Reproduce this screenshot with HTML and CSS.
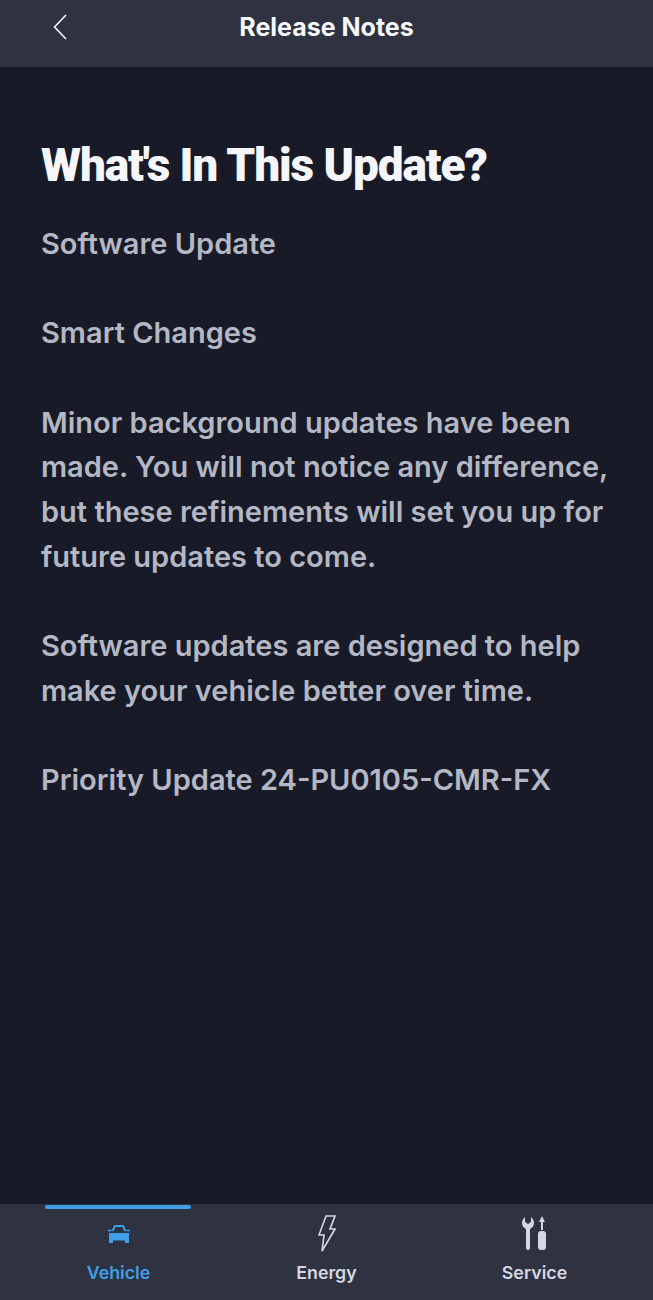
FILE: index.html
```html
<!DOCTYPE html>
<html lang="en">
<head>
<meta charset="utf-8">
<title>Release Notes</title>
<link rel="stylesheet" href="styles.css">
</head>
<body>
<div class="screen">
  <header class="topbar">
    <svg class="back" width="14" height="26" viewBox="0 0 14 26"><path d="M13 1 1.500 13 13 25" fill="none" stroke="#f4f6fb" stroke-width="1.600"/></svg>
    <h1 class="title">Release Notes</h1>
  </header>
  <main class="content">
    <h2 class="heading">What's In This Update?</h2>
    <p>Software Update</p>
    <p>Smart Changes</p>
    <p>Minor background updates have been made. You will not notice any difference, but these refinements will set you up for future updates to come.</p>
    <p>Software updates are designed to help make your vehicle better over time.</p>
    <p>Priority Update 24-PU0105-CMR-FX</p>
  </main>
  <nav class="tabs">
    <div class="tab active">
      <div class="tab-icon">
        <svg width="24" height="20" viewBox="0 0 24 20"><path d="M5.500 7 8 2h8l2.500 5" fill="none" stroke="#3f9fe6" stroke-width="2"/><path d="M1 6.500h3.500M19.500 6.500H23" stroke="#3f9fe6" stroke-width="1.600"/><path d="M2 9h20v10h-4v-2.500H6V19H2z" fill="#3f9fe6"/></svg>
      </div>
      <span>Vehicle</span>
    </div>
    <div class="tab">
      <div class="tab-icon">
        <svg width="18" height="38" viewBox="0 0 18 38"><path d="M8 1h9l-5 13h5L4 36l2-16H1z" fill="none" stroke="#d5d7e2" stroke-width="1.600"/></svg>
      </div>
      <span>Energy</span>
    </div>
    <div class="tab">
      <div class="tab-icon">
        <svg width="26" height="36" viewBox="0 0 26 36"><path d="M3 1C1 3 0 5 0 7c0 3 2 5 4 6v19a2 2 0 0 0 4 0V13c2-1 4-3 4-6 0-2-1-4-3-6v5L6 8 3 6z" fill="#d5d7e2"/><path d="m20 0 3 6h-2v8h-2V6h-2z" fill="#d5d7e2"/><rect x="16" y="15" width="8" height="19" rx="3" fill="#d5d7e2"/></svg>
      </div>
      <span>Service</span>
    </div>
  </nav>
</div>
</body>
</html>
```
FILE: styles.css
```css
* { box-sizing: border-box; }
html, body { margin: 0; padding: 0; }
body { font-family: Inter, "Liberation Sans", sans-serif; background: #181b27; }
.screen { width: 653px; height: 1300px; display: flex; flex-direction: column; background: #181b27; }
.topbar { height: 67px; background: #2f3240; display: grid; grid-template-columns: 1fr auto 1fr; align-items: start; padding: 0 0 0 53px; flex: none; }
.back { margin-top: 14px; }
.title { grid-column: 2; margin: 11px 53px 0 0; font-size: 25px; line-height: 32px; font-weight: 700; color: #f6f8fd; white-space: nowrap; }
.content { flex: 1; padding: 68px 41px 0; }
.heading { margin: 0 0 27px; font-family: Roboto, sans-serif; font-size: 46px; line-height: 60px; font-weight: 900; color: #f4f6fc; letter-spacing: -1.1px; }
.content p { margin: 0 0 44.7px; font-size: 29px; line-height: 44.7px; font-weight: 600; color: #b4b7c4; }
.tabs { height: 96px; background: #2f3240; display: grid; grid-template-columns: repeat(3, 208px); justify-content: center; flex: none; }
.tab { display: flex; flex-direction: column; align-items: center; padding-top: 10px; font-size: 17.8px; line-height: 22px; font-weight: 600; color: #d5d7e2; position: relative; }
.tab-icon { height: 40px; margin-bottom: 8px; display: flex; align-items: center; justify-content: center; }
.tab.active { color: #3f9fe6; }
.tab.active::before { content: ""; position: absolute; top: 1px; left: 30px; width: 146px; height: 4px; background: #3f9fe6; border-radius: 2px; }
```
